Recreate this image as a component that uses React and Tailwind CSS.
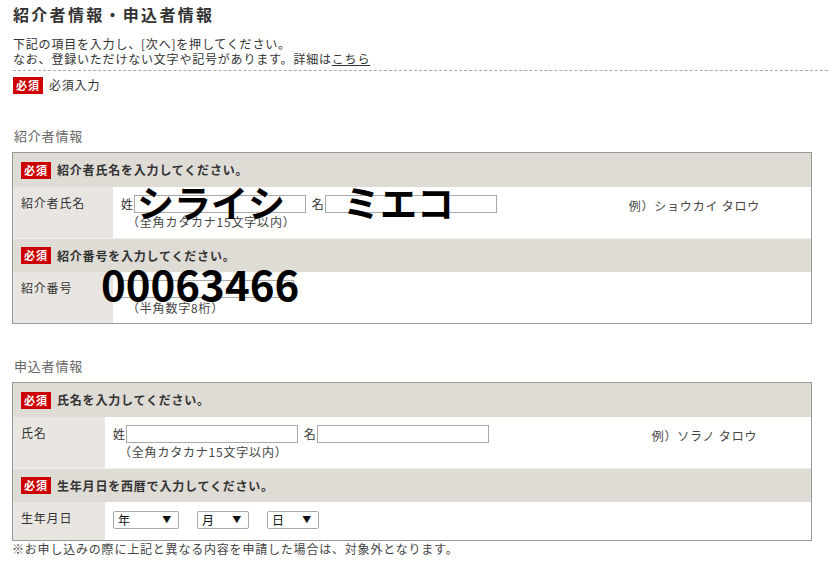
const FONT = { fontFamily: '"Noto Sans CJK JP", "Noto Sans", sans-serif' };

function Badge() {
  return (
    <span className="inline-flex h-[17px] items-center bg-[#cc0000] px-[3px] text-[11px] font-bold leading-none tracking-[1px] text-white">
      必須
    </span>
  );
}

function HeadRow({ children, first }) {
  return (
    <div className={`flex h-[34px] items-center gap-[6px] bg-[#dfdbd5] pl-[8px] ${first ? '' : 'border-t border-[#efefef]'}`}>
      <Badge />
      <span className="text-[12px] font-bold text-[#333]">{children}</span>
    </div>
  );
}

function TextInput({ className }) {
  return <input type="text" className={`h-[18px] border border-[#a9a9a9] bg-white ${className}`} />;
}

function NameFields({ example, exampleGap, indent }) {
  return (
    <div className={`flex pt-[8px] ${indent}`}>
      <div>
        <div className="flex items-center text-[12px] text-[#333]">
          <span>姓</span>
          <TextInput className="w-[172px]" />
          <span className="ml-[6px]">名</span>
          <TextInput className="w-[172px]" />
        </div>
        <p className="ml-[6px] mt-[1px] text-[12px] leading-[16px] text-[#444]">（全角カタカナ15文字以内）</p>
      </div>
      <p className={`mt-[-2px] text-[12px] text-[#444] ${exampleGap}`}>{example}</p>
    </div>
  );
}

function Select({ label, w }) {
  return (
    <div className={`flex h-[18px] items-center justify-between rounded-[2px] border border-[#a9a9a9] bg-white pl-[4px] pr-[6px] text-[12px] text-[#111] ${w}`}>
      <span>{label}</span>
      <span className="text-[9px]">▼</span>
    </div>
  );
}

function Big({ children, className }) {
  return (
    <span
      className={`pointer-events-none absolute font-bold leading-none tracking-normal text-black ${className}`}
      style={{ fontFamily: '"Noto Sans CJK JP", "Noto Sans", sans-serif' }}
    >
      {children}
    </span>
  );
}

export default function App() {
  return (
    <div className="h-[564px] w-[828px] overflow-hidden bg-white tracking-[0.8px] text-[#333]" style={FONT}>
      <div className="px-[13px] pt-[4px]">
        <h1 className="text-[16px] font-bold leading-[20px] tracking-[2.3px] text-[#333]">紹介者情報・申込者情報</h1>
        <div className="mt-[12px] text-[12px] leading-[15px] text-[#333]">
          <p>下記の項目を入力し、[次へ]を押してください。</p>
          <p>
            なお、登録いただけない文字や記号があります。詳細は<span className="underline">こちら</span>
          </p>
        </div>
      </div>
      <div className="ml-[13px] mt-[4px] border-t border-dashed border-[#aaa]" />
      <div className="flex items-center gap-[6px] px-[13px] pt-[5px] text-[12px]">
        <Badge />
        <span>必須入力</span>
      </div>

      <h2 className="mt-[33px] px-[14px] text-[13px] leading-[18px] text-[#666]">紹介者情報</h2>
      <div className="mx-[12px] mt-[7px] w-[800px] border border-[#999]">
        <HeadRow first>紹介者氏名を入力してください。</HeadRow>
        <div className="relative grid h-[51px] grid-cols-[100px_1fr]">
          <div className="bg-[#e9e6e1] pl-[8px] pt-[7px] text-[12px]">紹介者氏名</div>
          <NameFields example="例）ショウカイ タロウ" exampleGap="ml-[132px] pt-[4px]" indent="pl-[8px]" />
          <Big className="left-[124px] top-[-3px] text-[37px]">シライシ</Big>
          <Big className="left-[330px] top-[-3px] text-[37px]">ミエコ</Big>
        </div>
        <HeadRow>紹介番号を入力してください。</HeadRow>
        <div className="relative grid h-[51px] grid-cols-[100px_1fr]">
          <div className="bg-[#e9e6e1] pl-[8px] pt-[7px] text-[12px]">紹介番号</div>
          <div className="pl-[5px] pt-[5px]">
            <TextInput className="w-[176px]" />
            <p className="ml-[9px] mt-[-1px] text-[12px] leading-[16px] text-[#444]">（半角数字8桁）</p>
          </div>
          <Big className="left-[88px] top-[-10px] text-[42px]">00063466</Big>
        </div>
      </div>

      <h2 className="mt-[33px] px-[14px] text-[13px] leading-[18px] text-[#666]">申込者情報</h2>
      <div className="mx-[12px] mt-[7px] w-[800px] border border-[#999]">
        <HeadRow first>氏名を入力してください。</HeadRow>
        <div className="grid h-[51px] grid-cols-[92px_1fr]">
          <div className="bg-[#e9e6e1] pl-[8px] pt-[7px] text-[12px]">氏名</div>
          <NameFields example="例）ソラノ タロウ" exampleGap="ml-[163px] pt-[4px]" indent="pl-[8px]" />
        </div>
        <HeadRow>生年月日を西暦で入力してください。</HeadRow>
        <div className="grid h-[38px] grid-cols-[92px_1fr]">
          <div className="bg-[#e9e6e1] pl-[8px] pt-[7px] text-[12px]">生年月日</div>
          <div className="flex gap-[18px] pl-[8px] pt-[9px]">
            <Select label="年" w="w-[66px]" />
            <Select label="月" w="w-[52px]" />
            <Select label="日" w="w-[52px]" />
          </div>
        </div>
      </div>
      <p className="px-[12px] text-[12px] leading-[15px] text-[#444]">
        ※お申し込みの際に上記と異なる内容を申請した場合は、対象外となります。
      </p>
    </div>
  );
}
